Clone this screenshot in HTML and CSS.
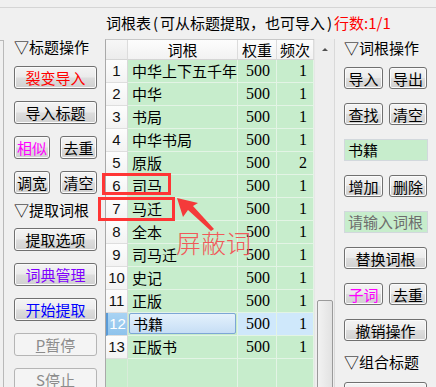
FILE: index.html
```html
<!DOCTYPE html>
<html>
<head>
<meta charset="utf-8">
<link rel="stylesheet" href="styles.css">
</head>
<body>
<div class="app">
  <div class="topline"></div>
  <div class="title">词根表<span class="par">(</span>可从标题提取，也可导入<span class="par">)</span><span class="red">行数:1/1</span></div>
  <div class="main">
    <div class="left">
      <div class="edge"></div>
      <div class="col">
        <div class="label">▽标题操作</div>
        <button class="btn first c-red">裂变导入</button>
        <button class="btn">导入标题</button>
        <div class="pair">
          <button class="btn half c-mag">相似</button>
          <button class="btn half">去重</button>
        </div>
        <div class="pair">
          <button class="btn half">调宽</button>
          <button class="btn half">清空</button>
        </div>
        <div class="label mid">▽提取词根</div>
        <button class="btn after-label">提取选项</button>
        <button class="btn c-purple">词典管理</button>
        <button class="btn c-blue">开始提取</button>
        <button class="btn disabled"><u>P</u>暂停</button>
        <button class="btn disabled"><u>S</u>停止</button>
      </div>
    </div>

    <div class="grid">
      <div class="row head">
        <div class="c num"></div>
        <div class="c word">词根</div>
        <div class="c w">权重</div>
        <div class="c f">频次</div>
      </div>
      <div class="row"><div class="c num">1</div><div class="c word">中华上下五千年</div><div class="c w">500</div><div class="c f">1</div></div>
      <div class="row"><div class="c num">2</div><div class="c word">中华</div><div class="c w">500</div><div class="c f">1</div></div>
      <div class="row"><div class="c num">3</div><div class="c word">书局</div><div class="c w">500</div><div class="c f">1</div></div>
      <div class="row"><div class="c num">4</div><div class="c word">中华书局</div><div class="c w">500</div><div class="c f">1</div></div>
      <div class="row"><div class="c num">5</div><div class="c word">原版</div><div class="c w">500</div><div class="c f">2</div></div>
      <div class="row"><div class="c num">6</div><div class="c word">司马</div><div class="c w">500</div><div class="c f">1</div></div>
      <div class="row"><div class="c num">7</div><div class="c word">马迁</div><div class="c w">500</div><div class="c f">1</div></div>
      <div class="row"><div class="c num">8</div><div class="c word">全本</div><div class="c w">500</div><div class="c f">1</div></div>
      <div class="row"><div class="c num">9</div><div class="c word">司马迁</div><div class="c w">500</div><div class="c f">1</div></div>
      <div class="row"><div class="c num">10</div><div class="c word">史记</div><div class="c w">500</div><div class="c f">1</div></div>
      <div class="row"><div class="c num">11</div><div class="c word">正版</div><div class="c w">500</div><div class="c f">1</div></div>
      <div class="row sel"><div class="c num">12</div><div class="c word"><span class="focus">书籍</span></div><div class="c w">500</div><div class="c f">1</div></div>
      <div class="row"><div class="c num">13</div><div class="c word">正版书</div><div class="c w">500</div><div class="c f">1</div></div>
      <div class="row filler"><div class="c num"></div><div class="c word"></div><div class="c w"></div><div class="c f"></div></div>
    </div>

    <div class="scroll">
      <div class="arrow-up"><span class="tri"></span></div>
      <div class="thumb"></div>
    </div>

    <div class="right">
      <div class="label">▽词根操作</div>
      <div class="pair r first">
        <button class="btn sm">导入</button>
        <button class="btn sm">导出</button>
      </div>
      <div class="pair r">
        <button class="btn sm">查找</button>
        <button class="btn sm">清空</button>
      </div>
      <div class="input">书籍</div>
      <div class="pair r">
        <button class="btn sm">增加</button>
        <button class="btn sm">删除</button>
      </div>
      <div class="input ph">请输入词根</div>
      <button class="btn rw">替换词根</button>
      <div class="pair r">
        <button class="btn sm c-mag">子词</button>
        <button class="btn sm">去重</button>
      </div>
      <button class="btn rw">撤销操作</button>
      <div class="label rlab">▽组合标题</div>
      <button class="btn rw after-label">组合选项</button>
    </div>
  </div>

  <div class="mark mark1"></div>
  <div class="mark mark2"></div>
  <svg class="arrow" width="436" height="387" viewBox="0 0 436 387">
    <polygon points="177,198 198,203 193,206 214,229 211,231 188,210 183,217" fill="#f43a3a"/>
  </svg>
  <div class="note">屏蔽词</div>
</div>
</body>
</html>
```

FILE: styles.css
```css
* { box-sizing: border-box; }
html, body { margin: 0; padding: 0; }
body {
  background: #f0f0f0;
  font-family: "Noto Sans CJK SC", "Noto Sans", sans-serif;
  font-size: 15px;
  color: #000;
}
.app {
  position: relative;
  width: 436px;
  height: 387px;
  overflow: hidden;
}
.topline {
  height: 8px;
  border-bottom: 1px solid #d5d5d5;
}
.title {
  height: 31px;
  padding-left: 106px;
  line-height: 29px;
  white-space: nowrap;
}
.title .par { display: inline-block; width: 9px; text-align: center; }
.title .red { color: #ff0000; }

.main {
  display: flex;
  height: 348px;
  overflow: hidden;
}

/* left panel */
.left {
  display: flex;
  width: 105px;
  flex: none;
}
.edge {
  width: 4px;
  margin-top: 1px;
  border-right: 1px solid #b9b9b9;
  border-top: 1px solid #b9b9b9;
}
.col {
  display: flex;
  flex-direction: column;
  padding-left: 10px;
  width: 101px;
}
.label {
  height: 16px;
  line-height: 16px;
  white-space: nowrap;
}
.label.mid { margin-top: 8px; }

.btn {
  font-family: inherit;
  font-size: 15px;
  color: #000;
  height: 23px;
  width: 83px;
  margin: 12px 0 0 0;
  padding: 1px 0 0 0;
  line-height: 20px;
  border: 1px solid #707070;
  border-radius: 3px;
  background: linear-gradient(#f4f4f4 0%, #ebebeb 48%, #dddddd 52%, #d0d0d0 100%);
  box-shadow: inset 0 0 0 1px #fbfbfb;
  text-align: center;
  white-space: nowrap;
}
.btn.first { margin-top: 11px; }
.btn.after-label { margin-top: 10px; }
.pair {
  display: flex;
  justify-content: space-between;
  width: 83px;
  margin-top: 12px;
}
.pair .btn { margin-top: 0; }
.btn.half { width: 36px; }
.pair .btn.half:last-child { width: 37px; }
.c-red { color: #ff0000; }
.c-mag { color: #ff00ff; }
.c-purple { color: #8000ff; }
.c-blue { color: #0000ff; }
.btn.disabled {
  color: #8c8c8c;
  border-color: #b5b5b5;
  background: #f4f4f4;
  box-shadow: none;
}
.btn.disabled u { text-decoration-thickness: 1px; }

/* grid */
.grid {
  width: 209px;
  flex: none;
  display: flex;
  flex-direction: column;
  border-left: 1px solid #a9a9a9;
  border-top: 1px solid #c8c8c8;
  background: #c7edcc;
}
.row {
  display: flex;
  height: 23px;
  flex: none;
}
.c {
  height: 100%;
  border-right: 1px solid #e3f4e5;
  border-bottom: 1px solid #e3f4e5;
  line-height: 22px;
  white-space: nowrap;
  overflow: hidden;
}
.c.num {
  width: 22px;
  text-align: center;
  font-family: "Liberation Sans", sans-serif;
  background: linear-gradient(#fdfdfd, #f3f3f3);
  border-right-color: #d9d9d9;
  border-bottom-color: #dedede;
  color: #111;
}
.c.word { width: 110px; padding-left: 4px; }
.c.w, .c.f {
  text-align: right;
  padding-right: 6px;
  font-family: "Liberation Serif", serif;
  font-size: 16px;
}
.c.w { width: 39px; }
.c.f { width: 37px; }

.row.head { height: 20px; }
.row.head .c {
  background: linear-gradient(#fdfdfd, #f2f2f2);
  border-right-color: #dcdcdc;
  border-bottom-color: #d5d5d5;
  line-height: 19px;
  text-align: center;
  padding: 0;
  font-family: "Noto Sans CJK SC", sans-serif;
  font-size: 15px;
}
.row.head .c.num { background: linear-gradient(#f7f7f7, #ececec); }

.row.sel .c.num {
  background: linear-gradient(#a9d3f3, #8ec3ec);
  border-left: 2px solid #5a9ad6;
  color: #fff;
}
.row.sel .c.w, .row.sel .c.f { background: #cfe8fb; }
.row.sel .c.word { padding: 0 0 0 1px; }
.focus {
  display: block;
  height: 21px;
  width: 107px;
  padding-left: 3px;
  line-height: 20px;
  border: 1px solid #7da6d6;
  border-radius: 2px;
  background: linear-gradient(#e4f1fc, #c6def5);
}

.row.filler { flex: 1; }
.row.filler .c { border-bottom: none; background: none; }
.row.filler .c.num { border-right-color: #d8ecd9; }

/* scrollbar */
.scroll {
  width: 21px;
  flex: none;
  display: flex;
  flex-direction: column;
  justify-content: space-between;
  align-items: center;
  border-right: 1px solid #d9d9d9;
  background: #eeeeee;
  border-left: 1px solid #e6e6e6;
}
.arrow-up {
  height: 20px;
  width: 100%;
  display: flex;
  justify-content: center;
  align-items: center;
}
.tri {
  width: 0;
  height: 0;
  border-left: 3px solid transparent;
  border-right: 3px solid transparent;
  border-bottom: 3px solid #505050;
}
.thumb {
  width: 16px;
  height: 92px;
  margin-bottom: -5px;
  border: 1px solid #9a9a9a;
  border-radius: 2px;
  background: linear-gradient(90deg, #f2f2f2, #e2e2e2);
}

/* right panel */
.right {
  flex: 1;
  display: flex;
  flex-direction: column;
  padding-left: 9px;
  padding-top: 1px;
}
.pair.r { margin-top: 14px; }
.pair.r.first { margin-top: 11px; }
.btn.sm { width: 39px; height: 22px; line-height: 19px; }
.pair.r .btn.sm:last-child { width: 38px; }
.btn.rw { height: 22px; line-height: 19px; margin-top: 14px; }
.input {
  width: 84px;
  height: 22px;
  margin-top: 14px;
  padding-left: 3px;
  line-height: 20px;
  background: #c7edcc;
  border: 1px solid #d2d8dd;
  white-space: nowrap;
}
.input.ph { color: #6d6d6d; }
.label.rlab { margin-top: 13px; }
.btn.rw.after-label { margin-top: 12px; }

/* annotation overlays */
.mark {
  position: absolute;
  border: 3px solid #ff3535;
}
.mark1 { left: 102px; top: 173px; width: 69px; height: 22px; }
.mark2 { left: 98px; top: 197px; width: 77px; height: 24px; }
.arrow { position: absolute; left: 0; top: 0; }
.note {
  position: absolute;
  left: 176px;
  top: 227px;
  font-size: 25px;
  line-height: 30px;
  color: #f05a5a;
  font-weight: 300;
  white-space: nowrap;
}
```
